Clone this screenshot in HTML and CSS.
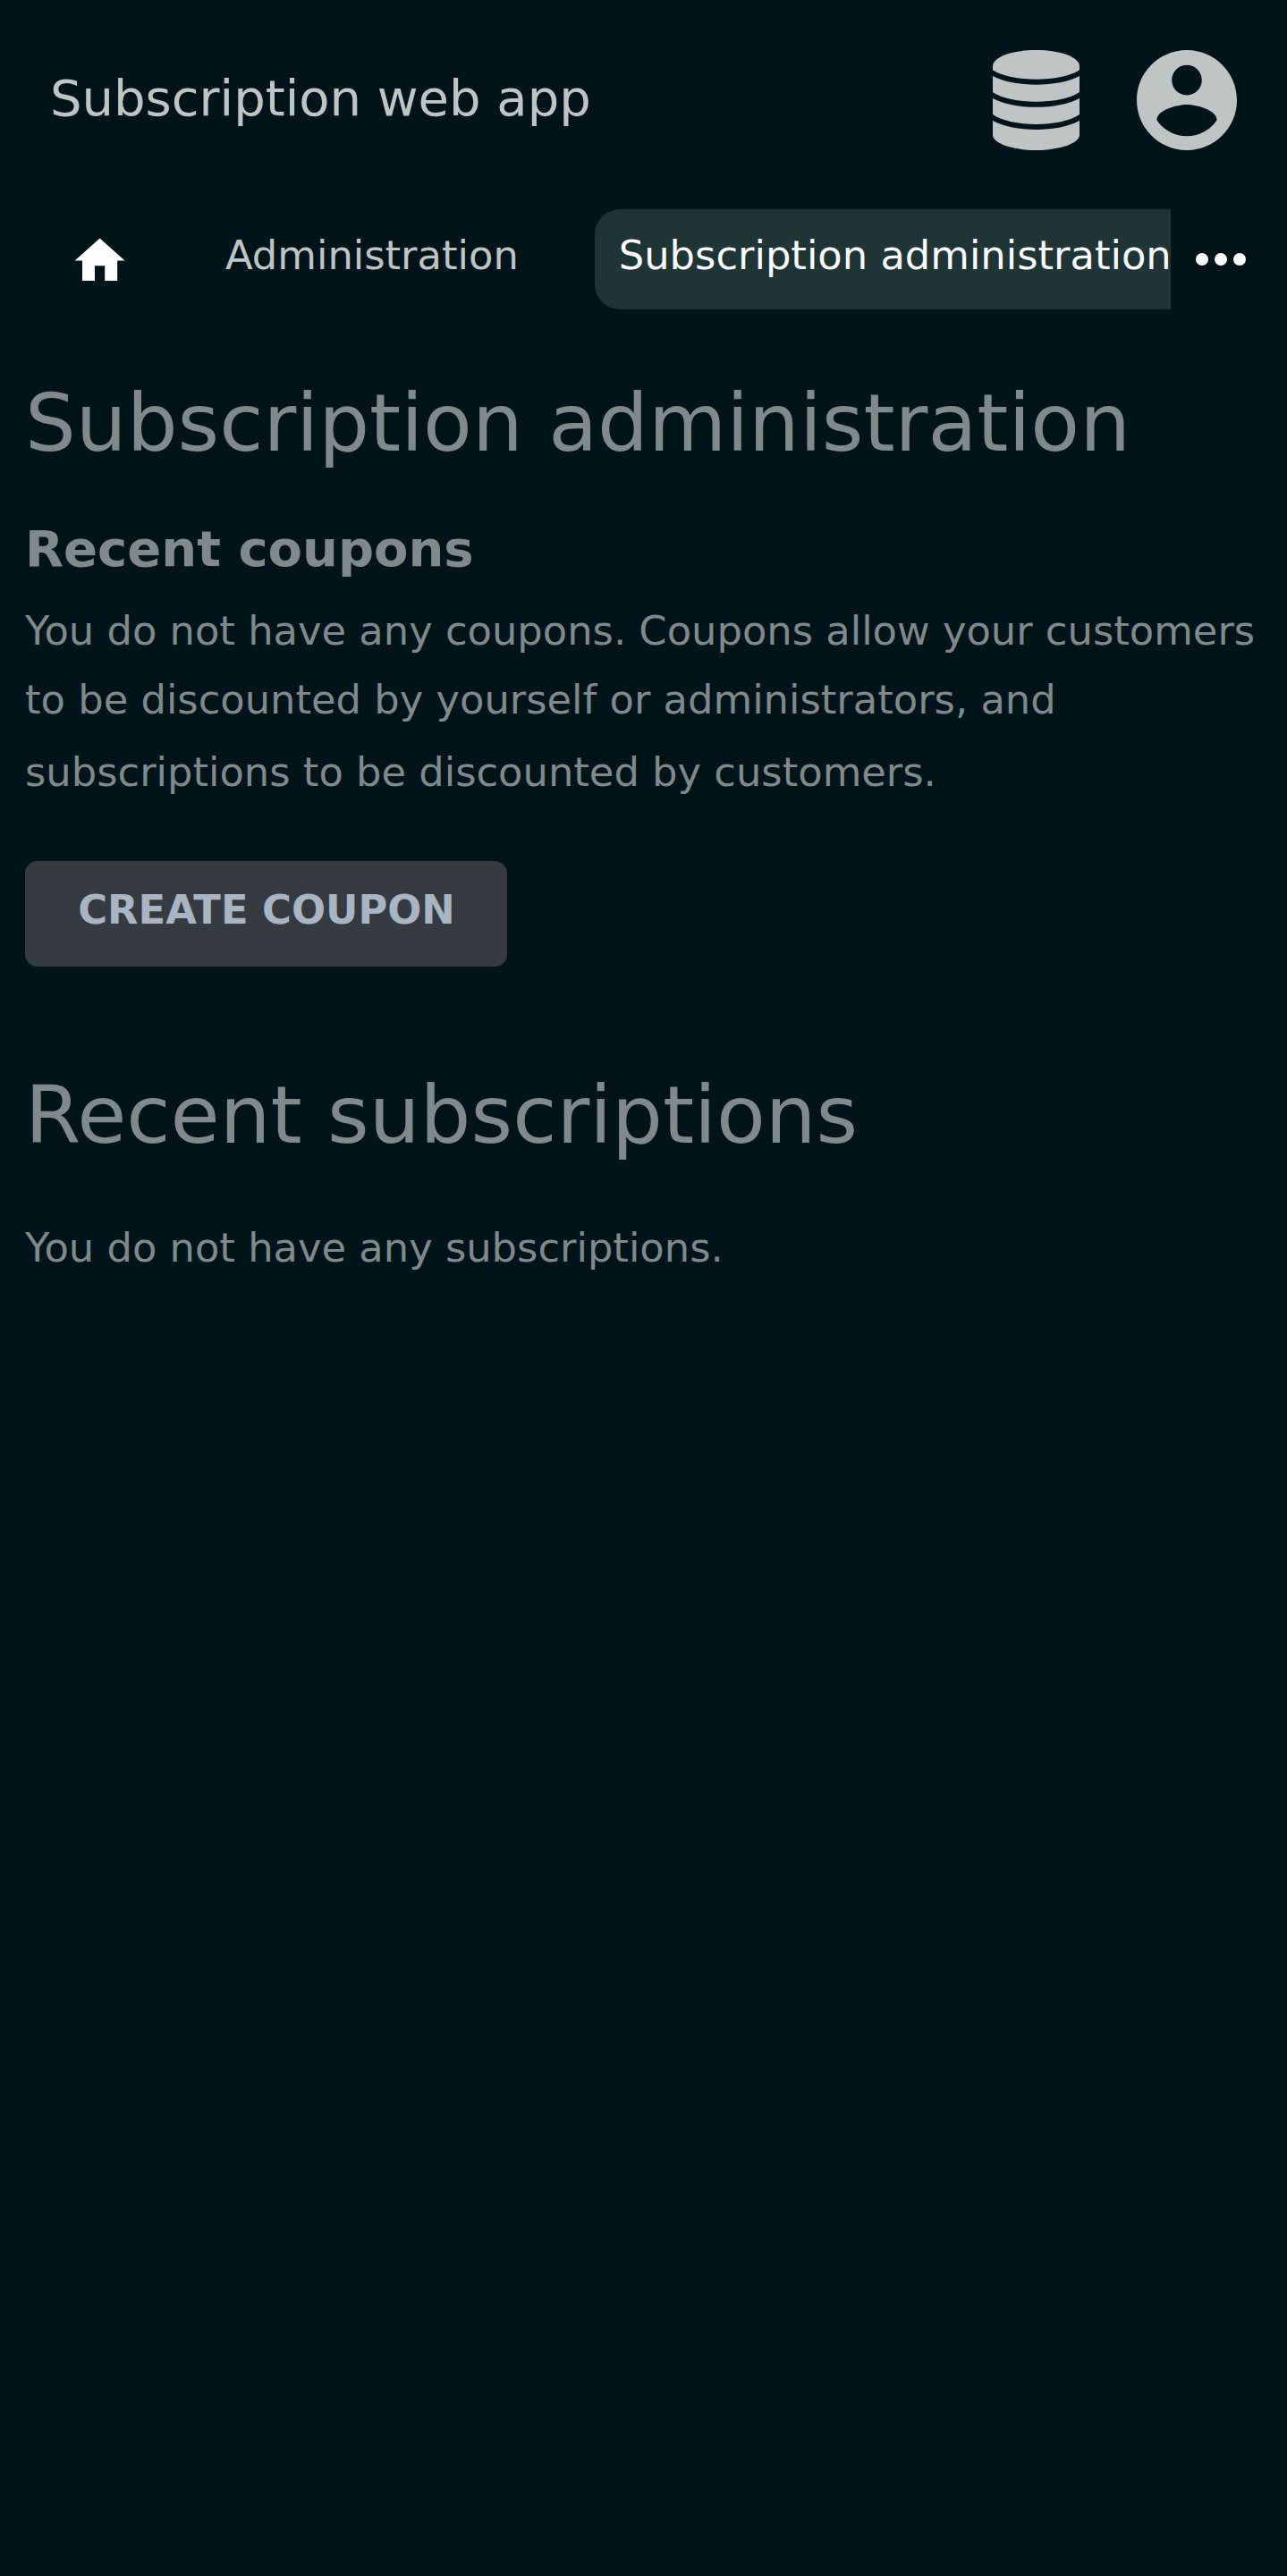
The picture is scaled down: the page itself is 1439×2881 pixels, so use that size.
FILE: index.html
```html
<!DOCTYPE html>
<html lang="en">
<head>
<meta charset="utf-8">
<title>Subscription web app</title>
<link rel="stylesheet" href="styles.css">
</head>
<body>
<header class="header">
  <div class="title">Subscription web app</div>
  <div class="menus">
    <svg class="database" viewBox="0 0 97 112" aria-label="Data">
      <path d="M0 18C0 8 21 0 48.5 0S97 8 97 18V22.3C87 29 68 32.8 48.5 32.8S10 29 0 22.3Z"/>
      <path d="M0 29C12 35.500 30 38.700 48.500 38.700S85 35.500 97 29V47C87 54 68 57.800 48.500 57.800S10 54 0 47Z"/>
      <path d="M0 54C12 60.500 30 63.800 48.500 63.800S85 60.500 97 54V72C87 79 68 83 48.500 83S10 79 0 72Z"/>
      <path d="M0 79C12 85.500 30 89 48.500 89S85 85.500 97 79V95C97 104 75 112 48.500 112S0 104 0 95Z"/>
    </svg>
    <svg class="account" viewBox="2 2 20 20" aria-label="Account">
      <path d="M12 2C6.48 2 2 6.48 2 12s4.48 10 10 10 10-4.480 10-10S17.520 2 12 2zm0 3c1.660 0 3 1.340 3 3s-1.340 3-3 3-3-1.340-3-3 1.340-3 3-3zm0 14.200c-2.500 0-4.710-1.280-6-3.220.030-1.990 4-3.080 6-3.080 1.990 0 5.970 1.090 6 3.080-1.290 1.940-3.500 3.220-6 3.220z"/>
    </svg>
  </div>
</header>
<nav class="nav">
  <div class="tabs">
    <a class="home"><svg viewBox="0 0 24 24" aria-label="Home"><path d="M10 20v-6h4v6h5v-8h3L12 3 2 12h3v8z"/></svg></a>
    <a class="tab">Administration</a>
    <a class="tab current">Subscription administration</a>
  </div>
  <svg class="more" viewBox="0 0 24 24" aria-label="More"><circle cx="6" cy="12" r="2"/><circle cx="12" cy="12" r="2"/><circle cx="18" cy="12" r="2"/></svg>
</nav>
<main class="main">
  <h1 class="heading">Subscription administration</h1>
  <h2 class="subheading">Recent coupons</h2>
  <p class="text intro">
    <span class="line">You do not have any coupons. Coupons allow your customers</span>
    <span class="line">to be discounted by yourself or administrators, and</span>
    <span class="line last">subscriptions to be discounted by customers.</span>
  </p>
  <a class="button">CREATE COUPON</a>
  <h1 class="heading second">Recent subscriptions</h1>
  <p class="text">You do not have any subscriptions.</p>
</main>
</body>
</html>
```
FILE: styles.css
```css
* { box-sizing: border-box; }
body {
  margin: 0;
  min-height: 2881px;
  background: #001419;
  color: #80898b;
  font: 44.8px/78px "DejaVu Sans", sans-serif;
}
svg { display: block; flex: none; }
.header {
  display: flex;
  justify-content: space-between;
  align-items: center;
  height: 224px;
  padding: 0 56px;
  color: #bfc4c5;
}
.title { font-size: 56px; line-height: 70px; padding-bottom: 5px; }
.menus { display: flex; gap: 64px; fill: currentColor; }
.database { width: 97px; height: 112px; }
.account { width: 112px; height: 112px; }
.nav {
  display: flex;
  height: 122.5px;
  padding-top: 10.4px;
}
.tabs {
  display: flex;
  width: 1309px;
  overflow: hidden;
}
.home { flex: none; width: 224px; padding: 23.8px 0 0 78.4px; }
.home svg { width: 67.2px; height: 67.2px; fill: #fff; }
.tab {
  flex: none;
  height: 112px;
  margin-right: 57px;
  padding: 0 28px;
  line-height: 103px;
  border-radius: 28px;
  color: #bfc4c5;
  white-space: nowrap;
}
.current {
  margin-right: 0;
  padding-left: 27px;
  background: #1f3535;
  color: #fafafe;
}
.more { width: 84px; height: 84px; margin: 14px 0 0 14px; fill: #fff; }
.main { padding: 70.5px 28px 0; }
.heading { margin: 0; font-size: 89.6px; font-weight: 400; line-height: 112px; }
.subheading { margin: 50px 0 18px; font-size: 56px; line-height: 70px; }
.text { margin: 0; white-space: nowrap; }
.line { display: block; height: 77px; }
.line + .line { height: 81px; }
.line.last { height: 78px; }
.button {
  display: block;
  width: 539px;
  height: 118.5px;
  margin: 59.7px 0 109.8px;
  padding-left: 1px;
  border-radius: 14px;
  background: #363a41;
  color: #a9b5c3;
  font-weight: 700;
  line-height: 109px;
  text-align: center;
}
.second { margin-bottom: 54px; }
```
